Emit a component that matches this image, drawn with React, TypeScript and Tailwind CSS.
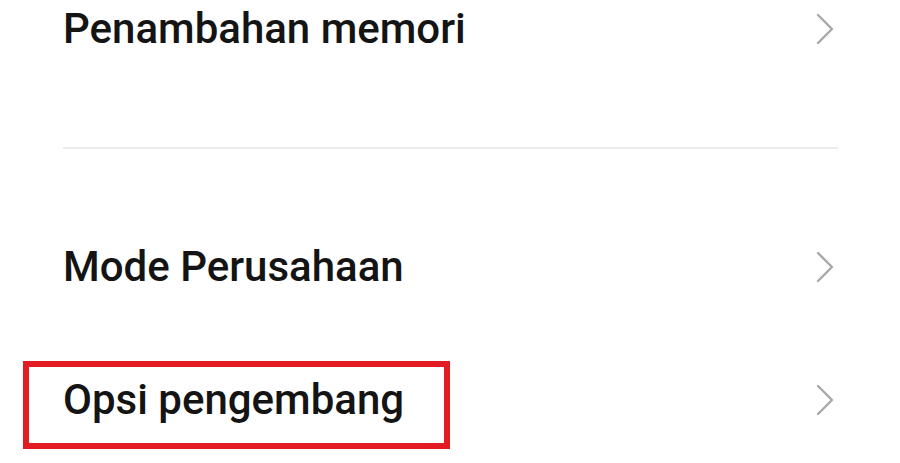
import React from "react";

const Chevron = () => (
  <svg width="20" height="32" viewBox="0 0 20 32" fill="none" className="shrink-0">
    <polyline points="3,2 17,16 3,30" stroke="#a8a8a8" strokeWidth="2.4" strokeLinecap="round" strokeLinejoin="round" />
  </svg>
);

const Row = ({ label }: { label: string }) => (
  <div className="flex h-[58px] items-center justify-between">
    <span className="text-[42px] font-medium leading-none text-[#141414]">{label}</span>
    <div className="mr-[3px]">
      <Chevron />
    </div>
  </div>
);

export default function App() {
  return (
    <div className="h-[463px] w-[900px] overflow-hidden bg-white" style={{ fontFamily: "Roboto, 'Liberation Sans', sans-serif" }}>
      <div className="pl-[63px] pr-[62px]">
        <Row label="Penambahan memori" />
        <div className="mt-[89px] h-[2px] bg-[#ececec]" />
        <div className="mt-[89px]">
          <Row label="Mode Perusahaan" />
        </div>
        <div className="relative mt-[75px]">
          <div className="pointer-events-none absolute left-[-40px] top-[-10px] h-[88px] w-[427px] border-[6px] border-[#e31b23]" />
          <Row label="Opsi pengembang" />
        </div>
      </div>
    </div>
  );
}
